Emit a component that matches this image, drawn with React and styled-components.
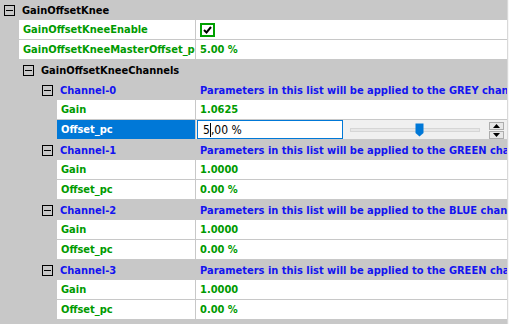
import React from "react";
import styled, { createGlobalStyle } from "styled-components";

const Global = createGlobalStyle`
  html, body { margin: 0; padding: 0; background: #f7f7f7; }
  body { font-family: "DejaVu Sans Condensed", "DejaVu Sans", sans-serif; }
`;

const GRAY = "#c8c8c8";
const GREEN = "#009a00";
const BLUE = "#1414f0";

const Tree = styled.div`
  width: 507px;
  height: 324px;
  overflow: hidden;
  background: ${GRAY};
  border-right: 1px solid #d9d9d9;
  font-size: 11px;
  font-weight: bold;
`;

const Row = styled.div`
  display: grid;
  grid-template-columns: 195px 1fr;
  column-gap: 1px;
  height: 20px;
  box-sizing: border-box;
  padding-bottom: ${(p) => (p.$leaf ? 1 : 0)}px;
`;

const HeadLabel = styled.div`
  display: flex;
  align-items: center;
  padding-left: ${(p) => p.$indent}px;
  color: ${(p) => p.$color};
  white-space: nowrap;
  overflow: hidden;
`;

const Toggle = styled.span`
  box-sizing: border-box;
  width: 11px;
  height: 11px;
  border: 1px solid #000;
  margin-right: 7px;
  display: flex;
  align-items: center;
  justify-content: center;
  flex: none;
  &::after {
    content: "";
    width: 7px;
    height: 1px;
    background: #000;
  }
`;

const LeafLabel = styled.div`
  margin-left: ${(p) => p.$indent}px;
  background: ${(p) => (p.$selected ? "#0078d7" : "#fff")};
  color: ${(p) => (p.$selected ? "#fff" : GREEN)};
  padding-left: 4px;
  display: flex;
  align-items: center;
  white-space: nowrap;
  overflow: hidden;
`;

const Value = styled.div`
  background: ${(p) => (p.$plain ? "transparent" : "#fff")};
  color: ${(p) => p.$color || GREEN};
  padding-left: 4px;
  display: flex;
  align-items: center;
  white-space: nowrap;
  overflow: hidden;
`;

const Check = styled.span`
  box-sizing: border-box;
  width: 15px;
  height: 14px;
  border: 2px solid #00a000;
  background: #fff;
  display: flex;
  align-items: center;
  justify-content: center;
`;

const Editor = styled.div`
  display: flex;
  align-items: stretch;
  background: #f0f0f0;
  overflow: hidden;
`;

const TextBox = styled.div`
  box-sizing: border-box;
  width: 146px;
  margin-left: 1px;
  border: 1px solid #0078d7;
  background: #fff;
  font-weight: normal;
  font-size: 12px;
  color: #000;
  padding-left: 5px;
  display: flex;
  align-items: center;
`;

const Caret = styled.span`
  display: inline-block;
  width: 1px;
  height: 14px;
  background: #000;
`;

const SliderArea = styled.div`
  flex: 1;
  display: flex;
  align-items: center;
  padding: 0 3px 0 7px;
  gap: 9px;
`;

const Track = styled.div`
  position: relative;
  flex: 1;
  height: 4px;
  box-sizing: border-box;
  border: 1px solid #d6d6d6;
  background: #e7e7e7;
`;

const Thumb = styled.svg`
  position: absolute;
  top: -6px;
`;

const Spin = styled.div`
  display: flex;
  flex-direction: column;
  gap: 1px;
  padding-top: 1px;
`;

const SpinBtn = styled.div`
  box-sizing: border-box;
  width: 15px;
  height: 8px;
  border: 1px solid #adadad;
  background: #e8e8e8;
  display: flex;
  align-items: center;
  justify-content: center;
`;

const Sub = ({ indent, label, value }) => (
  <Row $leaf>
    <LeafLabel $indent={indent}>{label}</LeafLabel>
    <Value>{value}</Value>
  </Row>
);

const channels = [
  { name: "Channel-0", color: "GREY", gain: "1.0625", off: null },
  { name: "Channel-1", color: "GREEN", gain: "1.0000", off: "0.00 %" },
  { name: "Channel-2", color: "BLUE", gain: "1.0000", off: "0.00 %" },
  { name: "Channel-3", color: "GREEN", gain: "1.0000", off: "0.00 %" },
];

export default function App() {
  return (
    <>
      <Global />
      <Tree>
        <Row>
          <HeadLabel $indent={4} $color="#000">
            <Toggle />
            GainOffsetKnee
          </HeadLabel>
          <div />
        </Row>
        <Row $leaf>
          <LeafLabel $indent={19}>GainOffsetKneeEnable</LeafLabel>
          <Value>
            <Check>
              <svg width="9" height="8" viewBox="0 0 9 8">
                <path d="M1 4 L3.5 6.5 L8 1" stroke="#000" strokeWidth="2" fill="none" />
              </svg>
            </Check>
          </Value>
        </Row>
        <Row $leaf>
          <LeafLabel $indent={19}>GainOffsetKneeMasterOffset_pc</LeafLabel>
          <Value>5.00 %</Value>
        </Row>
        <Row>
          <HeadLabel $indent={23} $color="#000">
            <Toggle />
            GainOffsetKneeChannels
          </HeadLabel>
          <div />
        </Row>
        {channels.map((c) => (
          <React.Fragment key={c.name}>
            <Row>
              <HeadLabel $indent={42} $color={BLUE}>
                <Toggle />
                {c.name}
              </HeadLabel>
              <Value $plain $color={BLUE}>
                Parameters in this list will be applied to the {c.color} channel
              </Value>
            </Row>
            <Sub indent={57} label="Gain" value={c.gain} />
            {c.off ? (
              <Sub indent={57} label="Offset_pc" value={c.off} />
            ) : (
              <Row $leaf>
                <LeafLabel $indent={57} $selected>
                  Offset_pc
                </LeafLabel>
                <Editor>
                  <TextBox>
                    5<Caret />,00 %
                  </TextBox>
                  <SliderArea>
                    <Track>
                      <Thumb width="9" height="14" viewBox="0 0 9 14" style={{ left: "64px" }}>
                        <path d="M0.5 0.5 H8.5 V10 L4.5 13.5 L0.5 10 Z" fill="#0078d7" />
                      </Thumb>
                    </Track>
                    <Spin>
                      <SpinBtn>
                        <svg width="7" height="4" viewBox="0 0 7 4">
                          <path d="M0 4 L3.5 0 L7 4 Z" fill="#000" />
                        </svg>
                      </SpinBtn>
                      <SpinBtn>
                        <svg width="7" height="4" viewBox="0 0 7 4">
                          <path d="M0 0 L3.5 4 L7 0 Z" fill="#000" />
                        </svg>
                      </SpinBtn>
                    </Spin>
                  </SliderArea>
                </Editor>
              </Row>
            )}
          </React.Fragment>
        ))}
      </Tree>
    </>
  );
}
